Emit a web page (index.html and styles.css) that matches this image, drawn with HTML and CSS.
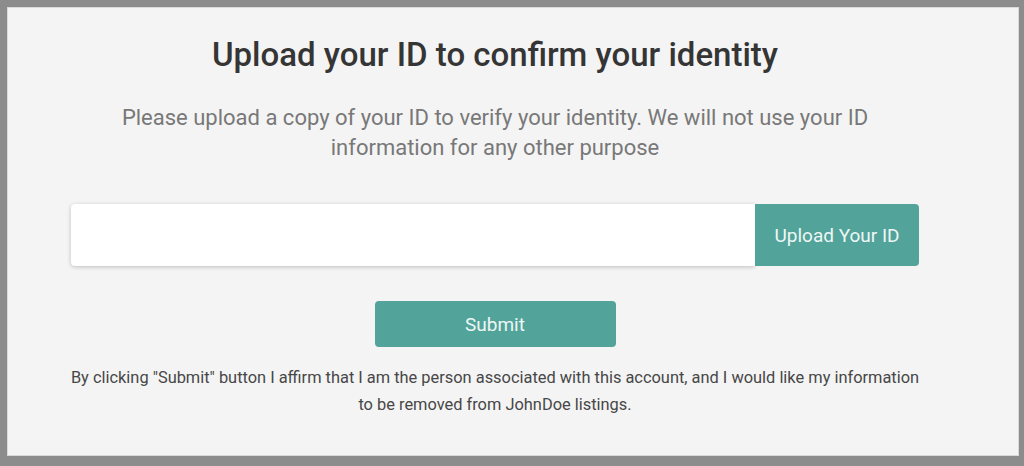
FILE: index.html
```html
<!DOCTYPE html>
<html lang="en">
<head>
<meta charset="utf-8">
<title>Upload your ID</title>
<link rel="stylesheet" href="styles.css">
</head>
<body>
<div class="frame">
  <main class="content">
    <h1 class="title">Upload your ID to confirm your identity</h1>
    <p class="lead">Please upload a copy of your ID to verify your identity. We will not use your ID information for any other purpose</p>
    <div class="upload-row">
      <div class="file-field"></div>
      <button class="upload-btn" type="button">Upload Your ID</button>
    </div>
    <button class="submit-btn" type="button">Submit</button>
    <p class="note">By clicking "Submit" button I affirm that I am the person associated with this account, and I would like my information to be removed from JohnDoe listings.</p>
  </main>
</div>
</body>
</html>
```

FILE: styles.css
```css
html, body {
  margin: 0;
  padding: 0;
}
body {
  background: #8c8c8c;
  width: 1024px;
  height: 466px;
  overflow: hidden;
  font-family: Roboto, "Liberation Sans", sans-serif;
}
.frame {
  margin: 7px 5px 0 7px;
  height: 449px;
  background: #f4f4f4;
  box-shadow: inset 0 0 0 1px #d9d9d9;
  box-sizing: border-box;
}
.content {
  box-sizing: border-box;
  width: 912px;
  padding: 28px 0 0 64px;
  display: flex;
  flex-direction: column;
  align-items: center;
}
.content > * {
  width: 848px;
}
.title {
  margin: 0;
  font-size: 33px;
  line-height: 40px;
  font-weight: 500;
  color: #353535;
  text-align: center;
}
.lead {
  margin: 28px 0 0;
  padding: 0 40px;
  box-sizing: border-box;
  font-size: 22px;
  line-height: 30px;
  color: #787878;
  text-align: center;
}
.upload-row {
  margin-top: 41px;
  display: flex;
  height: 62px;
}
.file-field {
  flex: 1;
  background: #ffffff;
  border-radius: 4px 0 0 4px;
  box-shadow: 0 1px 4px rgba(0, 0, 0, 0.22);
}
.upload-btn {
  width: 164px;
  border: none;
  background: #52a39a;
  color: #eef7f5;
  border-radius: 0 4px 4px 0;
  font-family: inherit;
  font-size: 19px;
  padding: 0;
}
.submit-btn {
  margin-top: 35px;
  width: 241px;
  height: 46px;
  border: none;
  background: #52a39a;
  color: #eef7f5;
  border-radius: 4px;
  font-family: inherit;
  font-size: 19px;
  padding: 0;
}
.note {
  margin: 17px 0 0;
  width: 856px;
  font-size: 16.4px;
  line-height: 27px;
  color: #474747;
  text-align: center;
}
```
